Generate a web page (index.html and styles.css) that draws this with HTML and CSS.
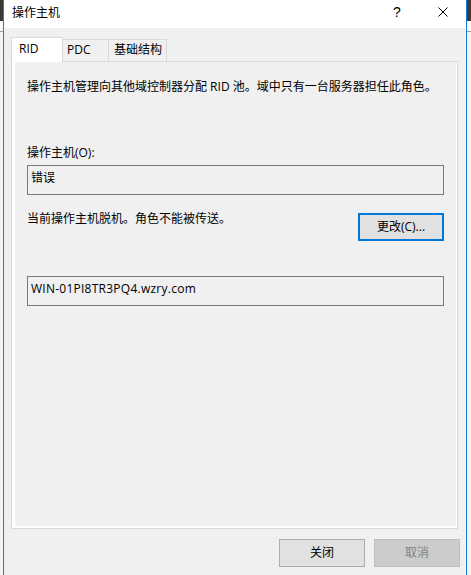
FILE: index.html
```html
<!DOCTYPE html>
<html lang="zh-CN">
<head>
<meta charset="utf-8">
<title>操作主机</title>
<link rel="stylesheet" href="styles.css">
</head>
<body>
<div class="screen">
  <div class="edge edge-left">
    <div class="edge-dark"></div>
    <div class="edge-light"></div>
    <div class="edge-line"></div>
    <div class="edge-fill"></div>
  </div>
  <div class="window">
    <div class="titlebar">
      <div class="title">操作主机</div>
      <div class="caption-btn help">?</div>
      <div class="caption-btn close">
        <svg width="10" height="10" viewBox="0 0 10 10"><path d="M0.5 0.5 L9.5 9.5 M9.5 0.5 L0.5 9.5" stroke="#000" stroke-width="1" fill="none"/></svg>
      </div>
    </div>
    <div class="body">
      <div class="tabs">
        <div class="tab tab-active tab-rid">RID</div>
        <div class="tab tab-pdc">PDC</div>
        <div class="tab tab-infra">基础结构</div>
      </div>
      <div class="panel">
        <div class="page">
          <p class="desc">操作主机管理向其他域控制器分配 RID 池。域中只有一台服务器担任此角色。</p>
          <p class="label">操作主机(O):</p>
          <div class="field field-first">错误</div>
          <div class="row">
            <span class="status">当前操作主机脱机。角色不能被传送。</span>
            <div class="btn btn-default">更改(C)...</div>
          </div>
          <div class="field field-second"><span class="host">WIN-01PI8TR3PQ4.wzry.com</span></div>
        </div>
      </div>
      <div class="footer">
        <div class="btn btn-plain">关闭</div>
        <div class="btn btn-disabled">取消</div>
      </div>
    </div>
  </div>
  <div class="edge edge-right">
    <div class="edge-dark"></div>
    <div class="edge-light"></div>
    <div class="edge-line"></div>
    <div class="edge-fill"></div>
  </div>
</div>
</body>
</html>
```

FILE: styles.css
```css
html, body {
  margin: 0;
  padding: 0;
  background: #f0f0f0;
}
body {
  font-family: "Open Sans", "Noto Sans CJK SC", sans-serif;
  font-size: 12px;
  color: #000;
}
.screen {
  width: 471px;
  height: 575px;
  display: flex;
  overflow: hidden;
}
.edge {
  display: flex;
  flex-direction: column;
}
.edge-left { width: 3px; }
.edge-right { width: 4px; }
.edge-dark { height: 21px; background: #3a3a3a; }
.edge-light { height: 10px; background: #fafafa; }
.edge-line { height: 1px; background: #9a9a9a; }
.edge-fill { flex: 1; background: #f3f3f3; }

.window {
  width: 462px;
  border-left: 1px solid #1c7ed6;
  border-right: 1px solid #1c7ed6;
  display: flex;
  flex-direction: column;
  background: #f0f0f0;
}
.titlebar {
  height: 28px;
  background: #fff;
  display: flex;
  align-items: center;
}
.title {
  flex: 1;
  padding-left: 8px;
  line-height: 16px;
  margin-top: -2px;
}
.caption-btn {
  width: 46px;
  height: 28px;
  display: flex;
  align-items: center;
  justify-content: center;
}
.help {
  font-family: "Liberation Sans", sans-serif;
  font-size: 14px;
  margin-top: -4px;
}
.close svg { display: block; margin-top: -4px; }

.body {
  flex: 1;
  display: flex;
  flex-direction: column;
  padding-top: 9px;
}
.tabs {
  display: flex;
  align-items: flex-end;
  padding-left: 7px;
  height: 24px;
}
.tab {
  box-sizing: border-box;
  height: 22px;
  border-top: 1px solid #d9d9d9;
  border-right: 1px solid #d9d9d9;
  background: #f0f0f0;
  line-height: 20px;
}
.tab-active {
  position: relative;
  z-index: 1;
  height: 25px;
  margin-bottom: -1px;
  border-left: 1px solid #d9d9d9;
  background: #fff;
  line-height: 21px;
}
.tab-rid { width: 52px; padding-left: 7px; }
.tab-pdc { width: 46px; padding-left: 4px; }
.tab-infra { width: 58px; padding-left: 5px; }

.panel {
  box-sizing: border-box;
  margin-left: 7px;
  width: 447px;
  height: 468px;
  border: 1px solid #d9d9d9;
  background: #fff;
  padding: 0 1px 2px 3px;
  display: flex;
}
.page {
  flex: 1;
  background: #f0f0f0;
  padding: 0 12px;
}
.desc {
  margin: 17px 0 0;
  line-height: 16px;
  white-space: nowrap;
}
.label {
  margin: 50px 0 0;
  line-height: 16px;
}
.field {
  box-sizing: border-box;
  height: 30px;
  border: 1px solid #7a7a7a;
  background: #f0f0f0;
  padding: 3px 0 0 3px;
  line-height: 18px;
}
.field-first { margin-top: 4px; }
.field-second { margin-top: 35px; }
.host { letter-spacing: 0.25px; }
.row {
  margin-top: 16px;
  display: flex;
  justify-content: space-between;
  align-items: flex-start;
}
.status {
  line-height: 16px;
}
.btn {
  box-sizing: border-box;
  width: 86px;
  height: 28px;
  display: flex;
  align-items: center;
  justify-content: center;
  line-height: 16px;
}
.btn-default {
  margin-top: 2px;
  border: 2px solid #0078d7;
  background: #e1e1e1;
}
.btn-plain {
  border: 1px solid #adadad;
  background: #e1e1e1;
}
.btn-disabled {
  border: 1px solid #bfbfbf;
  background: #cccccc;
  color: #838383;
}
.footer {
  display: flex;
  justify-content: flex-end;
  gap: 9px;
  padding: 10px 6px 0 0;
}
```
